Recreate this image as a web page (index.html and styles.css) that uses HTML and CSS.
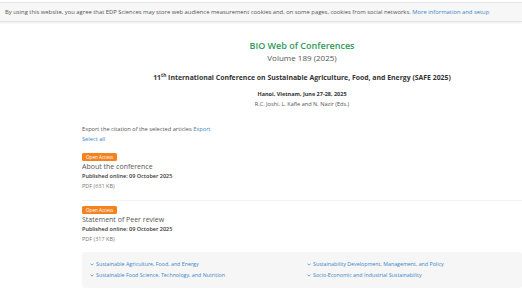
FILE: index.html
```html
<!DOCTYPE html>
<html lang="en">
<head>
<meta charset="utf-8">
<title>BIO Web of Conferences - Volume 189 (2025)</title>
<link rel="stylesheet" href="styles.css">
</head>
<body>
<div class="cookie">By using this website, you agree that EDP Sciences may store web audience measurement cookies and, on some pages, cookies from social networks. <a href="#">More information and setup</a></div>
<main class="content">
  <header class="volume-head">
    <h1 class="journal">BIO Web of Conferences</h1>
    <div class="volume">Volume 189 (2025)</div>
    <h2 class="conf">11<sup>th</sup> International Conference on Sustainable Agriculture, Food, and Energy (SAFE 2025)</h2>
    <div class="place">Hanoi, Vietnam, June 27-28, 2025</div>
    <div class="eds">R.C. Joshi, L. Kafle and N. Nazir (Eds.)</div>
  </header>
  <div class="export">Export the citation of the selected articles <a href="#">Export</a></div>
  <div class="select"><a href="#">Select all</a></div>
  <article class="item first">
    <span class="badge">Open Access</span>
    <div class="item-title">About the conference</div>
    <div class="pub">Published online: 09 October 2025</div>
    <div class="pdf">PDF (631 KB)</div>
  </article>
  <article class="item">
    <span class="badge">Open Access</span>
    <div class="item-title">Statement of Peer review</div>
    <div class="pub">Published online: 09 October 2025</div>
    <div class="pdf">PDF (317 KB)</div>
  </article>
  <nav class="topics">
    <a href="#"><svg class="chev" viewBox="0 0 4 3" width="4" height="3"><path d="M0.5 0.6 L2 2.2 L3.5 0.6" fill="none" stroke="currentColor" stroke-width="0.7"/></svg>Sustainable Agriculture, Food, and Energy</a>
    <a href="#"><svg class="chev" viewBox="0 0 4 3" width="4" height="3"><path d="M0.5 0.6 L2 2.2 L3.5 0.6" fill="none" stroke="currentColor" stroke-width="0.7"/></svg>Sustainability Development, Management, and Policy</a>
    <a href="#"><svg class="chev" viewBox="0 0 4 3" width="4" height="3"><path d="M0.5 0.6 L2 2.2 L3.5 0.6" fill="none" stroke="currentColor" stroke-width="0.7"/></svg>Sustainable Food Science, Technology, and Nutrition</a>
    <a href="#"><svg class="chev" viewBox="0 0 4 3" width="4" height="3"><path d="M0.5 0.6 L2 2.2 L3.5 0.6" fill="none" stroke="currentColor" stroke-width="0.7"/></svg>Socio-Economic and Industrial Sustainability</a>
  </nav>
</main>
</body>
</html>
```
FILE: styles.css
```css
html, body {
  margin: 0;
  padding: 0;
  background: #fff;
}
body {
  font-family: "Open Sans", "Noto Sans", sans-serif;
  color: #555;
  padding-top: 2px;
  overflow: hidden;
}
a {
  color: #3a86c6;
  text-decoration: none;
}
.cookie {
  background: #f7f7f7;
  border-top: 1px solid #e6e6e6;
  border-bottom: 1px solid #e2e2e2;
  box-shadow: 0 1px 2px rgba(0,0,0,0.08);
  height: 18px;
  line-height: 18px;
  font-size: 5.85px;
  padding-left: 5px;
  color: #555;
  white-space: nowrap;
}
.content {
  margin-left: 82px;
  width: 440px;
}
.volume-head {
  text-align: center;
  margin-top: 18px;
}
.journal {
  margin: 0;
  font-size: 9px;
  font-weight: 600;
  line-height: 12px;
  color: #2f9a5a;
}
.volume {
  font-size: 8px;
  line-height: 11px;
  color: #555;
}
.conf {
  margin: 10px 0 0;
  font-size: 6.9px;
  font-weight: 700;
  line-height: 10px;
  color: #333;
}
.conf sup {
  font-size: 4.8px;
  line-height: 0;
  vertical-align: 3px;
}
.place {
  margin-top: 6px;
  font-size: 5.5px;
  font-weight: 700;
  line-height: 10px;
  color: #333;
}
.eds {
  font-size: 5.6px;
  line-height: 10px;
  color: #555;
}
.export {
  margin-top: 15px;
  font-size: 5.7px;
  line-height: 10px;
}
.select {
  font-size: 5.7px;
  line-height: 10px;
}
.item {
  padding: 5px 0 9px;
  font-size: 5px;
}
.item.first {
  margin-top: 9px;
  padding-top: 0;
  border-bottom: 1px solid #f0f2f3;
}
.badge {
  display: block;
  width: max-content;
  background: #f5821f;
  color: #fff;
  font-size: 4.6px;
  height: 8px;
  line-height: 8px;
  padding: 0 4px;
  border-radius: 1.5px;
}
.item-title {
  margin-top: 1px;
  font-size: 7px;
  line-height: 10px;
  color: #555;
}
.pub {
  font-size: 5.5px;
  font-weight: 600;
  line-height: 9px;
  color: #333;
}
.pdf {
  font-size: 5.5px;
  line-height: 10px;
  color: #777;
}
.topics {
  margin-top: -1px;
  background: #f6f6f6;
  border-radius: 3px;
  padding: 7px 8px 7px;
  display: grid;
  grid-template-columns: 217px 1fr;
  font-size: 5.3px;
  line-height: 11px;
}
.topics a {
  display: flex;
  align-items: center;
  gap: 2px;
  white-space: nowrap;
}
.chev {
  flex: none;
}
```
